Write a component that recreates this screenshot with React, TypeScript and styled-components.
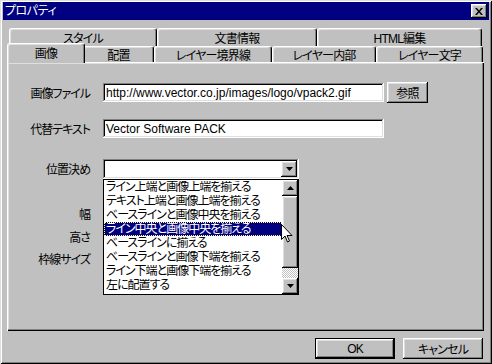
import React from 'react';
import styled, { createGlobalStyle } from 'styled-components';

const Global = createGlobalStyle`
  html, body { margin: 0; padding: 0; background: #c0c0c0; }
  body {
    font-family: "Liberation Sans", "Noto Sans CJK JP", sans-serif;
    font-size: 12px;
    color: #000;
    font-feature-settings: "palt";
  }
  * { box-sizing: border-box; }
`;

const raised = `box-shadow: inset -1px -1px #000, inset 1px 1px #fff, inset -2px -2px #808080, inset 2px 2px #dfdfdf;`;
const sunken = `box-shadow: inset -1px -1px #fff, inset 1px 1px #808080, inset -2px -2px #dfdfdf, inset 2px 2px #000;`;

const Window = styled.div`
  width: 492px;
  height: 364px;
  background: #c0c0c0;
  box-shadow: inset 1px 1px #dfdfdf, inset -1px -1px #000, inset 2px 2px #fff, inset -2px -2px #808080;
  padding: 2px 3px 3px 3px;
  display: flex;
  flex-direction: column;
`;

const TitleBar = styled.div`
  height: 18px;
  background: #000080;
  color: #fff;
  display: flex;
  align-items: center;
  justify-content: space-between;
  padding: 0 2px 0 2px;
`;

const TitleText = styled.span`
  font-size: 12px;
  line-height: 18px;
  letter-spacing: -0.5px;
`;

const CloseButton = styled.div`
  width: 16px;
  height: 14px;
  background: #c0c0c0;
  ${raised}
  display: flex;
  align-items: center;
  justify-content: center;
`;

const Body = styled.div`
  display: flex;
  flex-direction: column;
  padding: 8px 5px 0 4px;
`;

const TabRow = styled.div<{ $h: number }>`
  display: flex;
  align-items: flex-end;
  height: ${p => p.$h}px;
  margin-left: 2px;
  position: relative;
  z-index: 2;
`;

const Tab = styled.div<{ $w: number; $h: number; $active?: boolean }>`
  width: ${p => p.$w + (p.$active ? 4 : 0)}px;
  height: ${p => (p.$active ? 20 : p.$h)}px;
  margin: ${p => (p.$active ? '0 -2px -1px -2px' : '0')};
  background: #c0c0c0;
  border-top: 1px solid #fff;
  border-left: 1px solid #fff;
  border-right: 1px solid #000;
  border-radius: 3px 3px 0 0;
  box-shadow: inset -1px 0 #808080, inset 1px 1px #dfdfdf;
  display: flex;
  align-items: center;
  justify-content: center;
  padding-bottom: ${p => (p.$active ? 3 : 0)}px;
  position: relative;
  z-index: ${p => (p.$active ? 3 : 1)};
  white-space: nowrap;
  letter-spacing: -0.8px;
`;

const Panel = styled.div`
  height: 269px;
  background: #c0c0c0;
  box-shadow: inset 1px 1px #fff, inset -1px -1px #000, inset -2px -2px #808080, inset 2px 2px #dfdfdf;
  padding-top: 20px;
  display: flex;
  flex-direction: column;
  position: relative;
  z-index: 1;
`;

const FormRow = styled.div<{ $gap: number }>`
  display: grid;
  grid-template-columns: 84px auto;
  column-gap: 12px;
  align-items: center;
  height: 21px;
  margin-top: ${p => p.$gap}px;
`;

const Label = styled.div`
  text-align: right;
  white-space: nowrap;
  letter-spacing: -1px;
  padding-right: 1px;
`;

const FieldGroup = styled.div`
  display: flex;
  align-items: center;
  gap: 3px;
`;

const TextField = styled.div<{ $w: number }>`
  width: ${p => p.$w}px;
  height: 19px;
  background: #fff;
  ${sunken}
  padding: 0 3px;
  display: flex;
  align-items: center;
  white-space: nowrap;
  overflow: hidden;
`;

const PushButton = styled.div<{ $w: number; $default?: boolean }>`
  width: ${p => p.$w}px;
  height: 21px;
  background: #c0c0c0;
  ${p =>
    p.$default
      ? 'border: 1px solid #000; box-shadow: inset -1px -1px #000, inset 1px 1px #fff, inset -2px -2px #808080, inset 2px 2px #dfdfdf;'
      : raised}
  display: flex;
  align-items: center;
  justify-content: center;
  letter-spacing: -0.8px;
`;

const SelectWrap = styled.div`
  position: relative;
  width: 196px;
`;

const SelectBox = styled.div`
  height: 20px;
  background: #fff;
  ${sunken}
  padding: 2px;
  display: flex;
  justify-content: flex-end;
`;

const ArrowButton = styled.div`
  width: 16px;
  height: 16px;
  background: #c0c0c0;
  ${raised}
  display: flex;
  align-items: center;
  justify-content: center;
`;

const DropList = styled.div`
  position: absolute;
  top: 100%;
  left: 0;
  width: 196px;
  height: 116px;
  background: #fff;
  border: 1px solid #000;
  display: flex;
  z-index: 5;
`;

const Items = styled.div`
  flex: 1;
  display: flex;
  flex-direction: column;
  overflow: hidden;
`;

const Item = styled.div<{ $selected?: boolean }>`
  height: 14px;
  line-height: 12px;
  padding-left: 1px;
  white-space: nowrap;
  overflow: hidden;
  letter-spacing: -1px;
  background: ${p => (p.$selected ? '#000080' : 'transparent')};
  color: ${p => (p.$selected ? '#fff' : '#000')};
  border: 1px ${p => (p.$selected ? 'dotted #ffff80' : 'solid transparent')};
`;

const ScrollBar = styled.div`
  width: 16px;
  display: flex;
  flex-direction: column;
`;

const ScrollButton = styled.div`
  width: 16px;
  height: 16px;
  background: #c0c0c0;
  ${raised}
  display: flex;
  align-items: center;
  justify-content: center;
`;

const Thumb = styled.div`
  height: 72px;
  background: #c0c0c0;
  ${raised}
`;

const Track = styled.div`
  flex: 1;
  background: repeating-conic-gradient(#fff 0 25%, #c0c0c0 0 50%) 0 0 / 2px 2px;
`;

const Cursor = styled.svg`
  position: absolute;
  left: 178px;
  top: 65px;
  z-index: 6;
`;

const Footer = styled.div`
  display: flex;
  justify-content: flex-end;
  gap: 8px;
  margin-top: 7px;
  padding-right: 1px;
`;

const Down = () => (
  <svg width="7" height="4" viewBox="0 0 7 4">
    <path d="M0 0h7L3.5 4z" fill="#000" />
  </svg>
);
const Up = () => (
  <svg width="7" height="4" viewBox="0 0 7 4">
    <path d="M0 4h7L3.5 0z" fill="#000" />
  </svg>
);

const options = [
  'ライン上端と画像上端を揃える',
  'テキスト上端と画像上端を揃える',
  'ベースラインと画像中央を揃える',
  'ライン中央と画像中央を揃える',
  'ベースラインに揃える',
  'ベースラインと画像下端を揃える',
  'ライン下端と画像下端を揃える',
  '左に配置する',
];

export default function App() {
  return (
    <>
      <Global />
      <Window>
        <TitleBar>
          <TitleText>プロパティ</TitleText>
          <CloseButton>
            <svg width="8" height="7" viewBox="0 0 8 7">
              <path d="M0 0h2l2 2.5L6 0h2L5 3.5 8 7H6L4 4.5 2 7H0l3-3.5z" fill="#000" />
            </svg>
          </CloseButton>
        </TitleBar>
        <Body>
          <TabRow $h={18}>
            <Tab $w={148} $h={18}>スタイル</Tab>
            <Tab $w={160} $h={18}>文書情報</Tab>
            <Tab $w={165} $h={18}>HTML編集</Tab>
          </TabRow>
          <TabRow $h={16}>
            <Tab $w={74} $h={16} $active>画像</Tab>
            <Tab $w={71} $h={16}>配置</Tab>
            <Tab $w={118} $h={16}>レイヤー境界線</Tab>
            <Tab $w={104} $h={16}>レイヤー内部</Tab>
            <Tab $w={107} $h={16}>レイヤー文字</Tab>
          </TabRow>
          <Panel>
            <FormRow $gap={0}>
              <Label>画像ファイル</Label>
              <FieldGroup>
                <TextField $w={281}>http://www.vector.co.jp/images/logo/vpack2.gif</TextField>
                <PushButton $w={41}>参照</PushButton>
              </FieldGroup>
            </FormRow>
            <FormRow $gap={15}>
              <Label>代替テキスト</Label>
              <FieldGroup>
                <TextField $w={281}>Vector Software PACK</TextField>
              </FieldGroup>
            </FormRow>
            <FormRow $gap={19}>
              <Label>位置決め</Label>
              <SelectWrap>
                <SelectBox>
                  <ArrowButton>
                    <Down />
                  </ArrowButton>
                </SelectBox>
                <DropList>
                  <Items>
                    {options.map((o, i) => (
                      <Item key={o} $selected={i === 3}>
                        {o}
                      </Item>
                    ))}
                  </Items>
                  <ScrollBar>
                    <ScrollButton>
                      <Up />
                    </ScrollButton>
                    <Thumb />
                    <Track />
                    <ScrollButton>
                      <Down />
                    </ScrollButton>
                  </ScrollBar>
                </DropList>
                <Cursor width="12" height="19" viewBox="0 0 12 19">
                  <path d="M0.5 0.5v15l3.5-3.5 2.5 6 2-1-2.5-5.5h5z" fill="#fff" stroke="#000" strokeWidth="1" />
                </Cursor>
              </SelectWrap>
            </FormRow>
            <FormRow $gap={24}>
              <Label>幅</Label>
              <div />
            </FormRow>
            <FormRow $gap={2}>
              <Label>高さ</Label>
              <div />
            </FormRow>
            <FormRow $gap={1}>
              <Label>枠線サイズ</Label>
              <div />
            </FormRow>
          </Panel>
          <Footer>
            <PushButton $w={80} $default>OK</PushButton>
            <PushButton $w={80}>キャンセル</PushButton>
          </Footer>
        </Body>
      </Window>
    </>
  );
}
